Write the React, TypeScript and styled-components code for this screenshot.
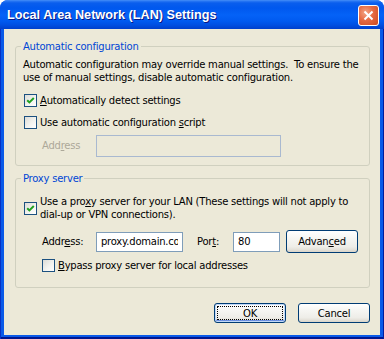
import React from 'react'
import styled, { createGlobalStyle } from 'styled-components'

const GlobalStyle = createGlobalStyle`
	html, body {
		margin: 0;
		padding: 0;
		background: #ffffff;
	}
	body {
		font-family: "DejaVu Sans", Tahoma, sans-serif;
		font-size: 10px;
		letter-spacing: -0.23px;
		color: #000000;
	}
	* {
		box-sizing: border-box;
	}
`

const Window = styled.div`
	width: 384px;
	height: 339px;
	display: flex;
	flex-direction: column;
	border-radius: 8px 8px 0 0;
	overflow: hidden;
	background: #0055ea;
`

const TitleBar = styled.div`
	flex: none;
	height: 29px;
	display: flex;
	align-items: center;
	justify-content: space-between;
	padding: 0 5px 0 7px;
	background: linear-gradient(
		to bottom,
		#4a92f7 0px,
		#2a78f4 1px,
		#0a5eed 3px,
		#0058ee 8px,
		#0462f7 15px,
		#005af0 21px,
		#004fe2 25px,
		#003fcb 29px
	);
`

const Title = styled.span`
	font-family: "Liberation Sans", Arial, sans-serif;
	font-weight: bold;
	font-size: 12.7px;
	letter-spacing: 0;
	color: #ffffff;
	text-shadow: 1px 1px 0 #0a1883;
	padding-top: 1px;
`

const CloseButton = styled.button`
	width: 21px;
	height: 21px;
	margin-top: 2px;
	padding: 0;
	border: 1px solid #ffffff;
	border-radius: 3px;
	background: radial-gradient(circle at 35% 35%, #f3a686 0%, #e66a42 45%, #cc4a20 100%);
	display: flex;
	align-items: center;
	justify-content: center;
`

const Frame = styled.div`
	flex: 1;
	display: flex;
	padding: 0 4px 4px 4px;
	background: #0a5ae8;
	box-shadow: inset 1px 0 #0831c4, inset -1px 0 #001d9e, inset 0 -2px #00168f;
`

const Client = styled.div`
	flex: 1;
	display: flex;
	flex-direction: column;
	background: #ece9d8;
	padding: 11px 10px 0 11px;
`

const GroupBox = styled.fieldset<{ $top?: number; $bottom: number }>`
	margin: ${p => p.$top ?? 0}px 0 0 0;
	padding: 0 10px ${p => p.$bottom}px 7px;
	border: 1px solid #d0d0bf;
	border-radius: 3px;
	min-width: 0;
`

const Legend = styled.legend`
	margin-left: -2px;
	padding: 0 2px;
	line-height: 13px;
	color: #0046d5;
`

const Description = styled.p`
	margin: 5px 0 0 0;
	line-height: 13px;
	white-space: pre;
`

const CheckRow = styled.div<{ $top: number; $indent?: number }>`
	display: flex;
	align-items: center;
	gap: 3px;
	margin: ${p => p.$top}px 0 0 ${p => p.$indent ?? 1}px;
	line-height: 13px;
	white-space: pre;
`

const Box = styled.span`
	flex: none;
	width: 13px;
	height: 13px;
	border: 1px solid #1c5180;
	background: linear-gradient(135deg, #dcdcd7 0%, #f3f3ef 55%, #ffffff 100%);
	display: flex;
	align-items: center;
	justify-content: center;
`

const Key = styled.span`
	text-decoration: underline;
`

const FieldRow = styled.div<{ $top: number }>`
	display: flex;
	align-items: center;
	height: 23px;
	margin: ${p => p.$top}px 0 0 19px;
`

const FieldLabel = styled.span<{ $width: number; $gap?: number; $disabled?: boolean }>`
	flex: none;
	width: ${p => p.$width}px;
	margin-left: ${p => p.$gap ?? 0}px;
	color: ${p => (p.$disabled ? '#aca899' : '#000000')};
`

const TextBox = styled.input<{ $width: number; $height: number }>`
	flex: none;
	width: ${p => p.$width}px;
	height: ${p => p.$height}px;
	margin: 0;
	padding: 0 4px;
	border: 1px solid #7f9db9;
	border-radius: 0;
	background: #ffffff;
	font-family: "DejaVu Sans", Tahoma, sans-serif;
	font-size: 10px;
	letter-spacing: -0.23px;
	color: #000000;
	outline: none;

	&:disabled {
		background: #ece9d8;
		border-color: #a9b9d0;
	}
`

const Button = styled.button<{ $default?: boolean; $tall?: boolean; $gap?: number }>`
	flex: none;
	width: 72px;
	height: ${p => (p.$tall ? 23 : 20)}px;
	margin-left: ${p => p.$gap ?? 0}px;
	padding: 0;
	border: 1px solid #003c74;
	border-radius: 3px;
	background: linear-gradient(to bottom, #ffffff 0%, #f6f6f3 35%, #eeede8 75%, #e3e0d8 90%, #d6d0c5 100%);
	font-family: "DejaVu Sans", Tahoma, sans-serif;
	font-size: 10px;
	letter-spacing: -0.23px;
	color: #000000;
	box-shadow: ${p =>
		p.$default ? 'inset 0 0 0 1px #c2d9f7, inset 0 -1px 0 1px #6c8fe0' : 'inset 0 -1px 0 #dcd7cc'};
	outline: ${p => (p.$default ? '1px dotted #000000' : 'none')};
	outline-offset: -4px;
`

const ButtonBar = styled.div`
	display: flex;
	justify-content: flex-end;
	gap: 12px;
	margin-top: 15px;
`

const Check = ({ checked }: { checked?: boolean }) => (
	<Box>
		{checked && (
			<svg width="11" height="11" viewBox="0 0 11 11">
				<polyline points="2.2,5.2 4.4,7.4 8.8,3" fill="none" stroke="#21a121" strokeWidth="2" />
			</svg>
		)}
	</Box>
)

export default function App() {
	return (
		<>
			<GlobalStyle />
			<Window>
				<TitleBar>
					<Title>Local Area Network (LAN) Settings</Title>
					<CloseButton aria-label="Close">
						<svg width="11" height="11" viewBox="0 0 11 11">
							<path d="M1.5 1.5 L9.5 9.5 M9.5 1.5 L1.5 9.5" stroke="#ffffff" strokeWidth="2" />
						</svg>
					</CloseButton>
				</TitleBar>
				<Frame>
					<Client>
						<GroupBox $bottom={8}>
							<Legend>Automatic configuration</Legend>
							<Description>
								{'Automatic configuration may override manual settings.  To ensure the'}
								<br />
								{'use of manual settings, disable automatic configuration.'}
							</Description>
							<CheckRow $top={10}>
								<Check checked />
								<span>
									<Key>A</Key>utomatically detect settings
								</span>
							</CheckRow>
							<CheckRow $top={9}>
								<Check />
								<span>
									Use automatic configuration <Key>s</Key>cript
								</span>
							</CheckRow>
							<FieldRow $top={5}>
								<FieldLabel $width={54} $disabled>
									Add<Key>r</Key>ess
								</FieldLabel>
								<TextBox $width={185} $height={22} disabled />
							</FieldRow>
						</GroupBox>

						<GroupBox $top={6} $bottom={15}>
							<Legend>Proxy server</Legend>
							<CheckRow $top={10}>
								<Check checked />
								<span>
									Use a pro<Key>x</Key>y server for your LAN (These settings will not apply to
									<br />
									dial-up or VPN connections).
								</span>
							</CheckRow>
							<FieldRow $top={9}>
								<FieldLabel $width={54}>
									Addr<Key>e</Key>ss:
								</FieldLabel>
								<TextBox $width={87} $height={20} defaultValue="proxy.domain.com" readOnly />
								<FieldLabel $width={36} $gap={14}>
									Por<Key>t</Key>:
								</FieldLabel>
								<TextBox $width={47} $height={20} defaultValue="80" readOnly />
								<Button $tall $gap={6}>
									Advan<Key>c</Key>ed
								</Button>
							</FieldRow>
							<CheckRow $top={6} $indent={19}>
								<Check />
								<span>
									<Key>B</Key>ypass proxy server for local addresses
								</span>
							</CheckRow>
						</GroupBox>

						<ButtonBar>
							<Button $default>OK</Button>
							<Button>Cancel</Button>
						</ButtonBar>
					</Client>
				</Frame>
			</Window>
		</>
	)
}
